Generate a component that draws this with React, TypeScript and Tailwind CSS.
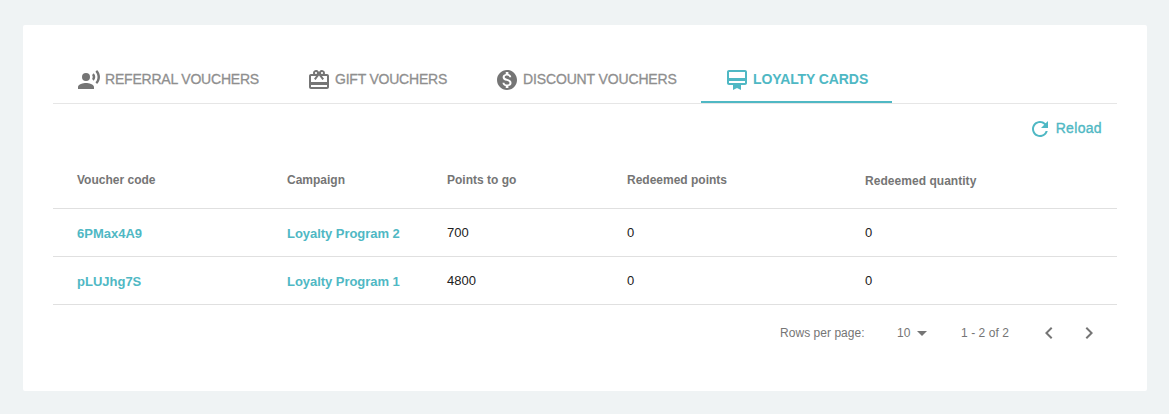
import type { IconType } from "react-icons";
import {
  MdArrowDropDown,
  MdCardGiftcard,
  MdCardMembership,
  MdChevronLeft,
  MdChevronRight,
  MdMonetizationOn,
  MdRecordVoiceOver,
  MdRefresh,
} from "react-icons/md";

type Tab = { label: string; icon: IconType; width: string; text: string; active?: boolean };

const tabs: Tab[] = [
  { label: "REFERRAL VOUCHERS", icon: MdRecordVoiceOver, width: "w-[230px]", text: "tracking-[-0.2px]" },
  { label: "GIFT VOUCHERS", icon: MdCardGiftcard, width: "w-[188px]", text: "tracking-[-0.22px]" },
  { label: "DISCOUNT VOUCHERS", icon: MdMonetizationOn, width: "w-[230px]", text: "tracking-[-0.14px]" },
  { label: "LOYALTY CARDS", icon: MdCardMembership, width: "w-[191px]", text: "tracking-[-0.1px]", active: true },
];

const columns = ["Voucher code", "Campaign", "Points to go", "Redeemed points"];

const rows = [
  { code: "6PMax4A9", campaign: "Loyalty Program 2", points: 700, redeemed: 0, quantity: 0 },
  { code: "pLUJhg7S", campaign: "Loyalty Program 1", points: 4800, redeemed: 0, quantity: 0 },
];

const grid = "grid grid-cols-[210px_160px_180px_238px_1fr] border-b border-[#e0e0e0] pl-6";

export default function App() {
  return (
    <div className="h-[414px] w-[1169px] bg-[#eff3f4] pt-[25px] pl-[23px] font-['Liberation_Sans',Arial,sans-serif]">
      <main className="h-[366px] w-[1124px] rounded-[2px] bg-white px-[30px] pt-[31px]">
        <nav className="flex h-12 border-b border-[#e6e6e6]">
          {tabs.map(({ label, icon: Icon, width, text, active }) => (
            <button
              key={label}
              className={`flex h-[47px] shrink-0 items-center whitespace-nowrap border-b-2 pl-6 text-sm ${width} ${
                active ? "border-[#4fb8c4] font-bold text-[#4fb8c4]" : "border-transparent text-[#8f8f8f]"
              }`}
            >
              <Icon className={`mr-1 mt-[3px] size-6 shrink-0 ${active ? "" : "text-[#757575]"}`} />
              <span className={`${text} ${active ? "" : "[-webkit-text-stroke:0.3px_#8f8f8f]"}`}>{label}</span>
            </button>
          ))}
        </nav>

        <div className="flex h-[49px] items-center justify-end pr-[15px] text-[#4fb8c4]">
          <button className="flex items-center gap-1 text-sm">
            <MdRefresh className="size-6" />
            <span className="-mt-0.5 tracking-[0.33px] [-webkit-text-stroke:0.35px_#4fb8c4]">Reload</span>
          </button>
        </div>

        <section className="text-[13px]">
          <div className={`${grid} h-14 pt-[19px] text-xs leading-4 font-bold text-[#757575]`}>
            {columns.map((column) => (
              <span key={column}>{column}</span>
            ))}
            <span className="pt-px tracking-[0.04px]">Redeemed quantity</span>
          </div>
          {rows.map((row) => (
            <div key={row.code} className={`${grid} h-12 pt-4 leading-4 text-[#212121]`}>
              <a className="pt-px font-bold text-[#4fb8c4]">{row.code}</a>
              <a className="pt-px font-bold tracking-[-0.04px] text-[#4fb8c4]">{row.campaign}</a>
              <span>{row.points}</span>
              <span>{row.redeemed}</span>
              <span>{row.quantity}</span>
            </div>
          ))}
        </section>

        <footer className="flex h-14 items-center justify-end pr-4 text-xs text-[#757575]">
          <span className="w-[117px] tracking-[0.04px]">Rows per page:</span>
          <button className="flex w-[64px] items-center">
            <span className="w-[13px]">10</span>
            <MdArrowDropDown className="size-6" />
          </button>
          <span className="w-[76px] tracking-[0.06px]">1 - 2 of 2</span>
          <MdChevronLeft className="mr-4 size-6" />
          <MdChevronRight className="size-6" />
        </footer>
      </main>
    </div>
  );
}
